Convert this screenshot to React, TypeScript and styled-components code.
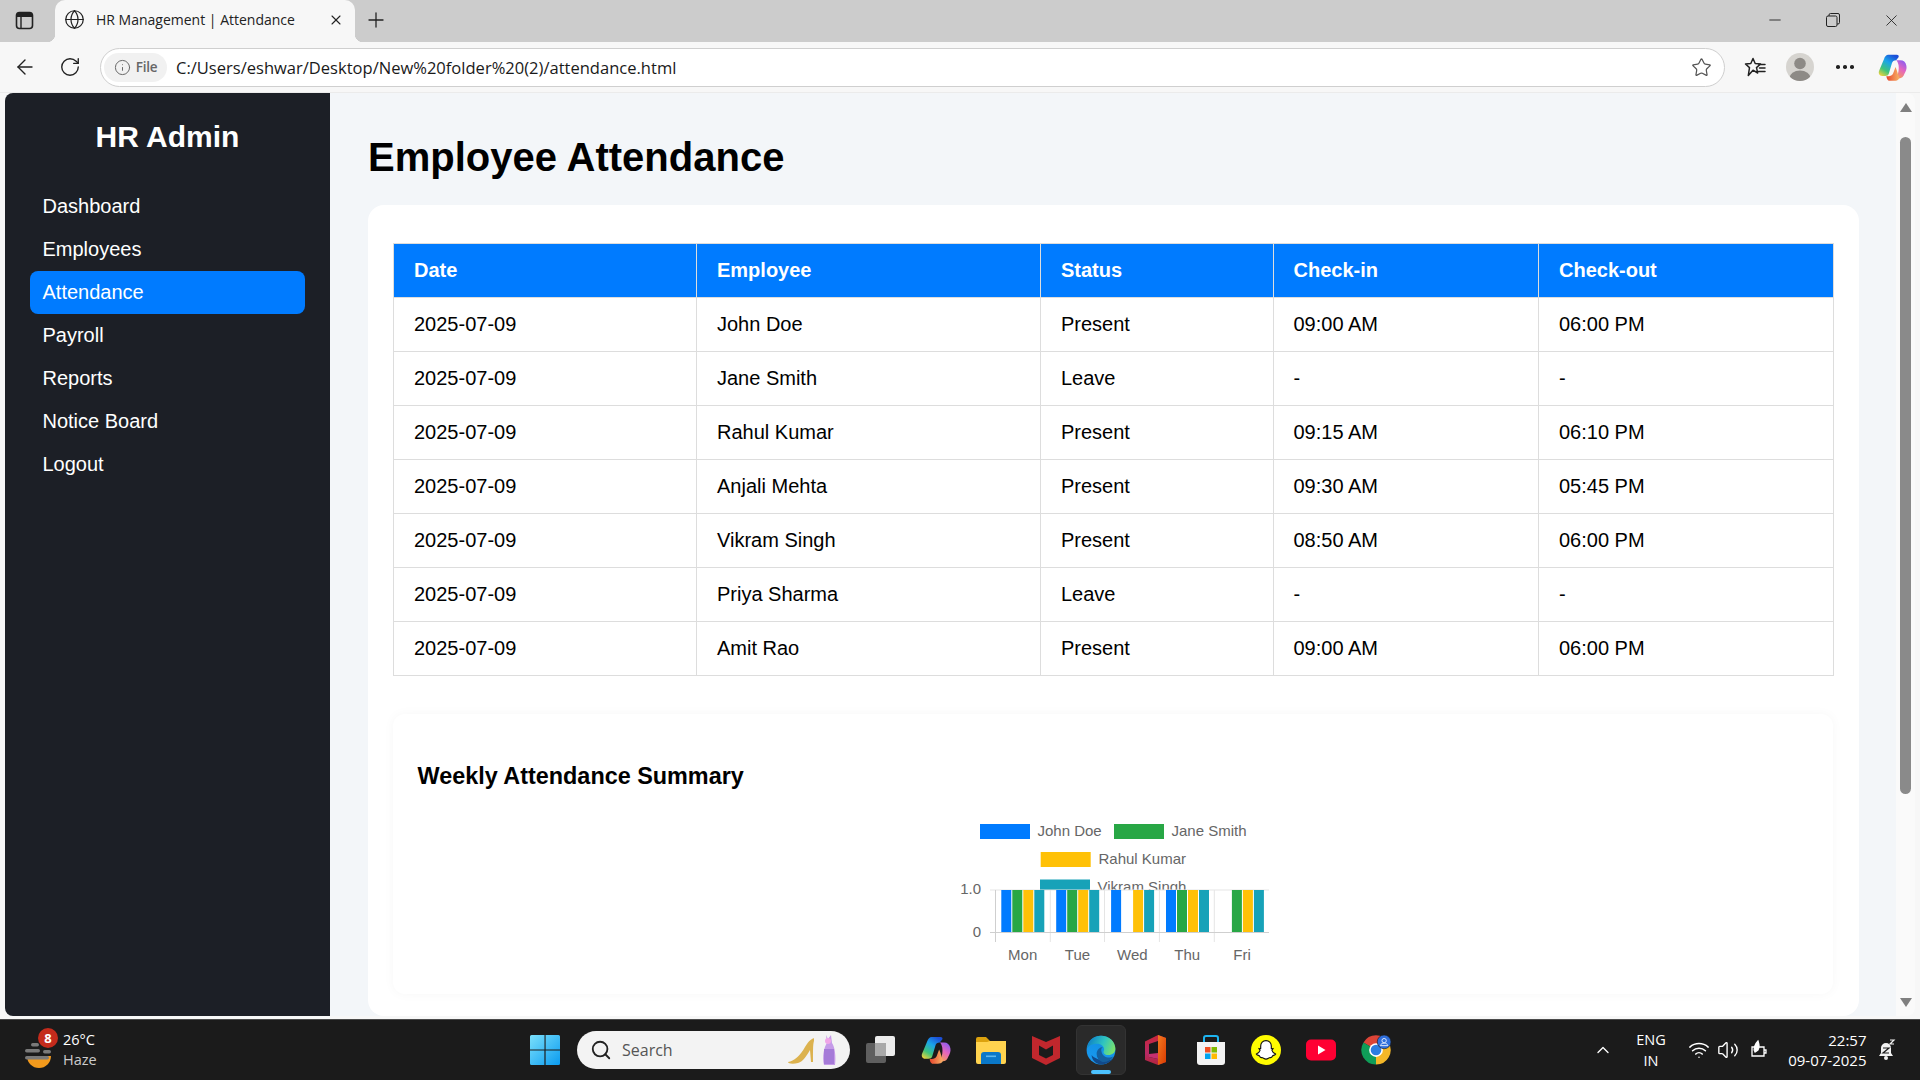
import React from "react";
import styled, { createGlobalStyle } from "styled-components";
import { ArrowLeft, RotateCw, Info, Star, X, Plus, Globe, Minus, ChevronUp, Wifi, Volume2, Search } from "lucide-react";

const GlobalStyle = createGlobalStyle`
  html, body { margin: 0; padding: 0; overflow: hidden; background: #f7f7f7; }
  * { box-sizing: border-box; }
  #root { width: 1920px; height: 1080px; }
`;

const UI_FONT = `"Open Sans", "Noto Sans", sans-serif`;
const PAGE_FONT = `"Liberation Sans", Arial, sans-serif`;

const Screen = styled.div`
  width: 1920px;
  height: 1080px;
  display: flex;
  flex-direction: column;
  overflow: hidden;
  background: #f7f7f7;
`;

/* ---------- browser chrome ---------- */
const TabStrip = styled.div`
  height: 42px;
  flex: none;
  display: flex;
  background: #cccccc;
`;
const TabMenu = styled.div`
  width: 55px;
  display: flex;
  align-items: center;
  justify-content: center;
  padding: 0 6px 2px 0;
`;
const Tab = styled.div`
  position: relative;
  width: 300px;
  display: flex;
  align-items: center;
  background: #f7f7f7;
  border-radius: 10px 10px 0 0;
  padding: 0 0 3px 9px;
  color: #222;
  &::before, &::after {
    content: "";
    position: absolute;
    bottom: 0;
    width: 8px;
    height: 8px;
  }
  &::before { left: -8px; background: radial-gradient(circle at 0 0, transparent 8px, #f7f7f7 8.5px); }
  &::after { right: -8px; background: radial-gradient(circle at 100% 0, transparent 8px, #f7f7f7 8.5px); }
`;
const TabTitle = styled.span`
  margin-left: 11px;
  flex: 1;
  font: 400 14px ${UI_FONT};
  white-space: nowrap;
`;
const TabClose = styled.span`
  width: 38px;
  display: flex;
  justify-content: center;
`;
const NewTab = styled.div`
  width: 42px;
  display: flex;
  align-items: center;
  justify-content: center;
  padding-bottom: 3px;
`;
const WindowControls = styled.div`
  margin-left: auto;
  display: flex;
`;
const WindowButton = styled.div`
  width: 58px;
  display: flex;
  align-items: center;
  justify-content: center;
  padding-bottom: 2px;
  color: #222;
`;

const Toolbar = styled.div`
  height: 51px;
  flex: none;
  display: flex;
  align-items: center;
  padding-left: 2px;
  border-bottom: 1px solid #ebebeb;
`;
const ToolButton = styled.div<{ $w?: number }>`
  width: ${(p) => p.$w ?? 45}px;
  flex: none;
  display: flex;
  align-items: center;
  justify-content: center;
  color: #222;
`;
const AddressBar = styled.div`
  width: 1625px;
  height: 39px;
  margin: 0 7.5px 0 8px;
  flex: none;
  display: flex;
  align-items: center;
  background: #fff;
  border: 1px solid #cfcfcf;
  border-radius: 20px;
  padding: 0 12px 0 3px;
`;
const FileChip = styled.div`
  width: 63px;
  height: 29px;
  flex: none;
  display: flex;
  align-items: center;
  justify-content: center;
  gap: 5px;
  background: #f1f1f1;
  border-radius: 15px;
  color: #666;
  font: 600 13.5px ${UI_FONT};
  letter-spacing: -0.3px;
`;
const Url = styled.span`
  margin-left: 9px;
  flex: 1;
  font: 400 16.55px ${UI_FONT};
  color: #1a1a1a;
  white-space: nowrap;
`;
const Avatar = styled.div`
  width: 28px;
  height: 28px;
  border-radius: 50%;
  background: #d6d4d0;
  overflow: hidden;
  display: flex;
`;
const Dots = styled.span`
  display: flex;
  gap: 3.5px;
  & > i {
    width: 3.5px;
    height: 3.5px;
    border-radius: 50%;
    background: #222;
  }
`;

/* ---------- page ---------- */
const PageFrame = styled.div`
  height: 923px;
  flex: none;
  margin: 0 5px;
  display: flex;
  overflow: hidden;
  border-radius: 8px;
  background: #f3f6f9;
  font-family: ${PAGE_FONT};
`;
const Sidebar = styled.aside`
  width: 325px;
  flex: none;
  background: #1c1f26;
  color: #fff;
  padding: 24px 25px 0;
`;
const Brand = styled.h2`
  margin: 0 0 28px;
  height: 40px;
  line-height: 40px;
  text-align: center;
  font-size: 30px;
  font-weight: 700;
`;
const NavList = styled.nav`
  display: flex;
  flex-direction: column;
`;
const NavItem = styled.a<{ $active?: boolean }>`
  height: 43px;
  line-height: 43px;
  padding-left: 12.5px;
  border-radius: 8px;
  font-size: 20px;
  color: #fff;
  background: ${(p) => (p.$active ? "#007bff" : "transparent")};
`;

const Main = styled.main`
  flex: 1;
  min-width: 0;
  padding: 38px 37px 0 38px;
  display: flex;
  flex-direction: column;
`;
const Heading = styled.h1`
  margin: 0 0 22px;
  height: 52px;
  line-height: 52px;
  font-size: 40px;
  font-weight: 700;
  color: #000;
`;
const Card = styled.section`
  flex: 1;
  min-height: 0;
  background: #fff;
  border-radius: 16px;
  padding: 38px 25px 0;
  overflow: hidden;
`;
const Table = styled.table`
  width: 1440px;
  table-layout: fixed;
  border-collapse: collapse;
  font-size: 20px;
`;
const Th = styled.th`
  height: 54px;
  padding: 0 20px;
  text-align: left;
  font-weight: 700;
  color: #fff;
  background: #007bff;
  border: 1px solid #ddd;
`;
const Td = styled.td`
  height: 54px;
  padding: 0 20px;
  color: #000;
  border: 1px solid #ddd;
`;
const ChartCard = styled.div`
  margin-top: 38px;
  height: 280px;
  width: 1440px;
  padding: 48px 24px 0 24.5px;
  background: #fff;
  border-radius: 12px;
  box-shadow: 0 0 12px rgba(0, 0, 0, 0.035);
`;
const ChartTitle = styled.h3`
  margin: 0 0 10px;
  height: 28px;
  line-height: 28px;
  font-size: 23.4px;
  font-weight: 700;
  color: #000;
`;
const ChartWrap = styled.div`
  display: flex;
  justify-content: center;
`;
const ChartSvg = styled.svg`
  display: block;
  overflow: visible;
  text {
    font-family: ${PAGE_FONT};
    font-size: 15px;
    fill: #666;
  }
`;

const ScrollBar = styled.div`
  width: 19px;
  flex: none;
  background: #fafafa;
  display: flex;
  flex-direction: column;
  align-items: center;
  padding: 7px 0 6px;
`;
const ScrollArrow = styled.svg`
  width: 14px;
  height: 16px;
  flex: none;
  fill: #808080;
`;
const ScrollThumb = styled.div`
  width: 11px;
  height: 657px;
  margin: 21px 0 auto;
  background: #8a8a8a;
  border-radius: 6px;
`;

/* ---------- taskbar ---------- */
const Taskbar = styled.footer`
  margin-top: 3px;
  height: 61px;
  flex: none;
  display: flex;
  align-items: center;
  background: #1b1b1b;
  border-top: 1px solid #4a4a4a;
  color: #fff;
  font-family: ${UI_FONT};
`;
const WeatherBlock = styled.div`
  width: 530px;
  flex: none;
  padding-left: 25px;
  display: flex;
  align-items: center;
  gap: 10px;
`;
const WeatherIcon = styled.div`
  position: relative;
  width: 29px;
  height: 40px;
  display: flex;
  align-items: flex-end;
`;
const Badge = styled.span`
  position: absolute;
  left: 13px;
  top: -2px;
  width: 20px;
  height: 20px;
  border-radius: 50%;
  background: #c42b1c;
  color: #fff;
  font: 700 13px/20px ${UI_FONT};
  text-align: center;
`;
const WeatherText = styled.div`
  display: flex;
  flex-direction: column;
  font-size: 14.5px;
  line-height: 20px;
  margin-left: -1px;
  & > span + span { color: #ccc; }
`;
const StartButton = styled.div`
  width: 30px;
  height: 30px;
  flex: none;
  display: flex;
`;
const SearchBox = styled.div`
  width: 273px;
  height: 38px;
  margin-left: 17px;
  flex: none;
  display: flex;
  align-items: center;
  background: #f3f3f3;
  border-radius: 19px;
  padding-left: 13px;
  color: #555;
  font-size: 16px;
`;
const SearchLabel = styled.span`
  margin-left: 10px;
  flex: 1;
`;
const SearchArt = styled.svg`
  width: 52px;
  height: 34px;
  margin-right: 12px;
`;
const AppDock = styled.div`
  margin-left: 3px;
  display: flex;
`;
const AppSlot = styled.div<{ $active?: boolean }>`
  position: relative;
  width: 55px;
  height: 50px;
  display: flex;
  align-items: center;
  justify-content: center;
  &::before {
    content: "";
    position: absolute;
    left: 2.5px;
    right: 2.5px;
    top: 0;
    bottom: 0;
    border-radius: 6px;
    display: ${(p) => (p.$active ? "block" : "none")};
    background: #2a2a2a;
    border: 1px solid #333;
  }
  &::after {
    content: "";
    position: absolute;
    left: 17.5px;
    width: 20px;
    height: 4px;
    bottom: 1px;
    border-radius: 2px;
    display: ${(p) => (p.$active ? "block" : "none")};
    background: #4cc2ff;
  }
  & > svg { position: relative; z-index: 1; }
`;
const TrayArea = styled.div`
  margin-left: auto;
  width: 330px;
  flex: none;
  display: flex;
  align-items: center;
`;
const TrayChevron = styled.div`
  width: 26px;
  display: flex;
  justify-content: center;
`;
const LangBlock = styled.div`
  width: 50px;
  margin-left: 10px;
  text-align: center;
  font-size: 14.5px;
  line-height: 21px;
`;
const TrayIcons = styled.div`
  margin-left: 8px;
  display: flex;
`;
const TraySlot = styled.div`
  width: 29.5px;
  display: flex;
  justify-content: center;
`;
const Clock = styled.div`
  width: 94px;
  text-align: right;
  font-size: 15px;
  line-height: 20px;
`;
const BellSlot = styled.div`
  width: 40px;
  display: flex;
  justify-content: center;
`;

/* ---------- data ---------- */
const COLS = [303, 344, 232.5, 265.5, 295];
const HEAD = ["Date", "Employee", "Status", "Check-in", "Check-out"];
const ROWS = [
  ["2025-07-09", "John Doe", "Present", "09:00 AM", "06:00 PM"],
  ["2025-07-09", "Jane Smith", "Leave", "-", "-"],
  ["2025-07-09", "Rahul Kumar", "Present", "09:15 AM", "06:10 PM"],
  ["2025-07-09", "Anjali Mehta", "Present", "09:30 AM", "05:45 PM"],
  ["2025-07-09", "Vikram Singh", "Present", "08:50 AM", "06:00 PM"],
  ["2025-07-09", "Priya Sharma", "Leave", "-", "-"],
  ["2025-07-09", "Amit Rao", "Present", "09:00 AM", "06:00 PM"],
];
const NAV = ["Dashboard", "Employees", "Attendance", "Payroll", "Reports", "Notice Board", "Logout"];
const BAR_COLORS = ["#007bff", "#28a745", "#ffc107", "#17a2b8"];
const DAYS = [
  { label: "Mon", cx: 82.7, present: [1, 1, 1, 1] },
  { label: "Tue", cx: 137.5, present: [1, 1, 1, 1] },
  { label: "Wed", cx: 192.4, present: [1, 0, 1, 1] },
  { label: "Thu", cx: 247.3, present: [1, 1, 1, 1] },
  { label: "Fri", cx: 302.1, present: [0, 1, 1, 1] },
];

/* ---------- drawings ---------- */
const AttendanceChart = () => (
  <ChartSvg width={346} height={170} viewBox="0 0 346 170">
    <rect x={40} y={24} width={50} height={15} fill="#007bff" />
    <text x={97.5} y={36}>John Doe</text>
    <rect x={174} y={24} width={50} height={15} fill="#28a745" />
    <text x={231.5} y={36}>Jane Smith</text>
    <rect x={100.7} y={52} width={50} height={15} fill="#ffc107" />
    <text x={158.5} y={64}>Rahul Kumar</text>
    <rect x={100} y={79.5} width={50} height={10.5} fill="#17a2b8" />
    <text x={157.5} y={91.5}>Vikram Singh</text>
    <rect x={100} y={90} width={182} height={12} fill="#fff" />
    {[110.3, 164.5, 219.4, 274.3].map((x) => (
      <line key={x} x1={x} x2={x} y1={90} y2={142} stroke="#e5e5e5" />
    ))}
    <line x1={50} x2={329} y1={90} y2={90} stroke="#e5e5e5" />
    <line x1={55.5} x2={55.5} y1={90} y2={142} stroke="#cfcfcf" />
    <line x1={50} x2={329} y1={132.5} y2={132.5} stroke="#cfcfcf" />
    {DAYS.map((d, i) =>
      d.present.map((on, j) =>
        on ? (
          <rect
            key={`${d.label}${j}`}
            x={61.3 + i * 54.9 + j * 11}
            y={90}
            width={10}
            height={42}
            fill={BAR_COLORS[j]}
          />
        ) : null
      )
    )}
    <text x={41} y={93.5} textAnchor="end">1.0</text>
    <text x={41} y={136.5} textAnchor="end">0</text>
    {DAYS.map((d) => (
      <text key={d.label} x={d.cx} y={160} textAnchor="middle">{d.label}</text>
    ))}
  </ChartSvg>
);

const TabsIcon = () => (
  <svg width="19" height="19" viewBox="0 0 19 19" fill="none">
    <rect x="1.5" y="1.5" width="16" height="16" rx="3" stroke="#222" strokeWidth="1.6" />
    <path d="M1.5 5a3 3 0 0 1 3-3.5h10a3 3 0 0 1 3 3.5v1h-16z" fill="#222" />
    <path d="M6 6v11" stroke="#222" strokeWidth="1.4" />
  </svg>
);
const RestoreIcon = () => (
  <svg width="14" height="14" viewBox="0 0 14 14" fill="none" stroke="#222" strokeWidth="1">
    <rect x="0.5" y="3" width="10.5" height="10.5" rx="1.5" />
    <path d="M3 3V2a1.5 1.5 0 0 1 1.5-1.5h7.5A1.5 1.5 0 0 1 13.5 2v7.5A1.5 1.5 0 0 1 12 11h-1" />
  </svg>
);
const FavoritesIcon = () => (
  <svg width="22" height="22" viewBox="0 0 22 22" fill="none" stroke="#222" strokeWidth="1.5" strokeLinejoin="round">
    <path d="M9 2.5l2.2 5 5.3.5-4 3.6 1.2 5.4L9 14.2 4.3 19.5l1.2-7.9L1.5 8l5.3-.5z" />
    <path d="M15 8.5h6M15.5 12h5.5M14.5 15.5H21" strokeLinecap="round" />
  </svg>
);
const AvatarFigure = () => (
  <svg width="28" height="28" viewBox="0 0 28 28">
    <circle cx="14" cy="10.5" r="5.8" fill="#8d8a86" />
    <ellipse cx="14" cy="25" rx="10.5" ry="7.5" fill="#8d8a86" />
  </svg>
);
const CopilotIcon = ({ size = 30, uid = "t" }: { size?: number; uid?: string }) => (
  <svg width={size} height={size} viewBox="0 0 48 48">
    <defs>
      <linearGradient id={`cpA${uid}`} x1="0.1" y1="1" x2="0.7" y2="0">
        <stop offset="0" stopColor="#f5d33b" />
        <stop offset="0.3" stopColor="#3fc47a" />
        <stop offset="0.65" stopColor="#1aa4ea" />
        <stop offset="1" stopColor="#1c4fd8" />
      </linearGradient>
      <linearGradient id={`cpB${uid}`} x1="0.3" y1="1" x2="0.7" y2="0">
        <stop offset="0" stopColor="#f59a5c" />
        <stop offset="0.5" stopColor="#e565c0" />
        <stop offset="1" stopColor="#8a5cf0" />
      </linearGradient>
      <linearGradient id={`cpC${uid}`} x1="0" y1="0" x2="1" y2="0">
        <stop offset="0" stopColor="#e8452c" />
        <stop offset="1" stopColor="#f7b267" />
      </linearGradient>
    </defs>
    <path d="M17 3h14c3 0 4 2 3 4l-4 5c-4 0-6 2-7 5l-5 17c-1 3-3 4-6 4H7c-5 0-7-5-5-9l8-19c1-4 4-7 7-7z" fill={`url(#cpA${uid})`} />
    <path d="M30 12h7c5 0 9 3 10 9 1 5-1 9-3 13-2 6-5 8-9 8l-4-2c3-6 4-14 3-20-1-4-2-7-4-8z" fill={`url(#cpB${uid})`} />
    <path d="M14 38c5 1 9 0 11-4l4-11c2 4 4 12 6 19-2 3-5 4-8 4H19c-3 0-5-4-5-8z" fill={`url(#cpC${uid})`} />
  </svg>
);
const WeatherArt = () => (
  <svg width="29" height="27" viewBox="0 0 29 27">
    <path d="M3 10h24a12 12 0 0 1-24 0z" transform="translate(-1 3)" fill="#f39a1c" />
    <rect x="6" y="0" width="8" height="3.5" rx="1.7" fill="#7a7a7a" />
    <rect x="0" y="6" width="15" height="3.5" rx="1.7" fill="#7a7a7a" />
    <rect x="18" y="7" width="8" height="3.5" rx="1.7" fill="#7a7a7a" />
    <rect x="0" y="13" width="24" height="3.5" rx="1.7" fill="#7a7a7a" />
  </svg>
);
const WindowsLogo = () => (
  <svg width="30" height="30" viewBox="0 0 30 30">
    <defs>
      <linearGradient id="win" x1="0" y1="0" x2="1" y2="1">
        <stop offset="0" stopColor="#7be0fb" />
        <stop offset="1" stopColor="#0a9bf0" />
      </linearGradient>
    </defs>
    <path d="M0 1.5A1.5 1.5 0 0 1 1.5 0h13v14.4H0zM15.6 0h12.9A1.5 1.5 0 0 1 30 1.5v12.9H15.6zM0 15.6h14.4V30H1.5A1.5 1.5 0 0 1 0 28.5zM15.6 15.6H30v12.9a1.5 1.5 0 0 1-1.5 1.5H15.6z" fill="url(#win)" />
  </svg>
);
const SearchDecor = () => (
  <SearchArt viewBox="0 0 52 34">
    <path d="M2 29c6-1 12-6 17-15 4-7 7-8 9-9v3c-1 3-1 8-1 21h-2l-1-12c-3 5-7 12-12 13-4 1-10 1-10-1z" fill="#dcb24e" />
    <path d="M40 2l2 4 3-4 1 8c3 4 4 14 3 22h-11c-2-8 0-18 3-22z" fill="#c59be8" />
    <path d="M38 16h10v15h-10z" fill="#a57bd8" />
    <circle cx="42" cy="8" r="3" fill="#f0a5e8" />
  </SearchArt>
);
const TaskViewIcon = () => (
  <svg width="30" height="30" viewBox="0 0 30 30">
    <rect x="0" y="8" width="20" height="20" rx="2" fill="#5f5f5f" />
    <rect x="9" y="1" width="20" height="20" rx="2" fill="#ececec" />
    <rect x="9" y="8" width="11" height="13" fill="#a9a9a9" />
  </svg>
);
const FolderIcon = () => (
  <svg width="30" height="28" viewBox="0 0 30 28">
    <path d="M0 3a2 2 0 0 1 2-2h8l4 4h14a2 2 0 0 1 2 2v3H0z" fill="#dca20e" />
    <path d="M0 6h11l3-1h16v21a2 2 0 0 1-2 2H2a2 2 0 0 1-2-2z" fill="#ffd34f" />
    <path d="M5 19a3 3 0 0 1 3-3h14a3 3 0 0 1 3 3v9H5z" fill="#0a78c9" />
    <rect x="10" y="19.5" width="10" height="1.6" fill="#5cb8f0" />
  </svg>
);
const McAfeeIcon = () => (
  <svg width="28" height="30" viewBox="0 0 28 30">
    <path d="M0 1l14 6 14-6v22l-14 7-14-7z" fill="#c1272d" />
    <path d="M7 10.5l7 4 7-4v9.5l-7 3.5-7-3.5z" fill="#1b1b1b" />
  </svg>
);
const EdgeIcon = () => (
  <svg width="30" height="30" viewBox="0 0 48 48">
    <defs>
      <linearGradient id="edgeG" x1="0" y1="0.3" x2="1" y2="0.6">
        <stop offset="0" stopColor="#0c7dc8" />
        <stop offset="0.55" stopColor="#2fc4c0" />
        <stop offset="1" stopColor="#7be36b" />
      </linearGradient>
      <linearGradient id="edgeB" x1="0.7" y1="0" x2="0.3" y2="1">
        <stop offset="0" stopColor="#0e8de0" />
        <stop offset="1" stopColor="#1a9af0" />
      </linearGradient>
    </defs>
    <circle cx="24" cy="24" r="23" fill="url(#edgeB)" />
    <path d="M44 37c-5 6-12 10-20 10-8 0-15-7-15-15 6 8 26 12 35 5z" fill="#114a8b" />
    <path d="M1.5 22C3 9 12 1 24 1c13 0 23 9 23 21 0 6-5 10-11 10-5 0-8-2-8-5 0-1 1-2 1-4 0-5-5-9-11-9C11 14 4 17 1.500 22z" fill="url(#edgeG)" />
    <path d="M17 30c0-6 5-11 10-11-3 2-3 5-2 8 1 5 6 9 12 9 3 0 6-1 7-2-4 7-12 10-18 9-6-2-9-7-9-13z" fill="#15609f" />
  </svg>
);
const OfficeIcon = () => (
  <svg width="21" height="30" viewBox="0 0 21 30">
    <defs>
      <linearGradient id="offA" x1="0" y1="0" x2="1" y2="1">
        <stop offset="0" stopColor="#f47a20" />
        <stop offset="1" stopColor="#d83b01" />
      </linearGradient>
      <linearGradient id="offL" x1="0" y1="0" x2="0" y2="1">
        <stop offset="0" stopColor="#c8263a" />
        <stop offset="0.6" stopColor="#b82a66" />
        <stop offset="1" stopColor="#b3243b" />
      </linearGradient>
    </defs>
    <path d="M0 6.500L13 0l8 3v24l-8 3-13-5z" fill="url(#offL)" />
    <path d="M4 9l9-3v18l-9-2z" fill="#1b1b1b" />
    <path d="M13 0l8 3v24l-8 3z" fill="url(#offA)" />
    <path d="M4 19l9-1v6l-9-2z" fill="#c7306f" />
  </svg>
);
const StoreIcon = () => (
  <svg width="30" height="31" viewBox="0 0 30 31">
    <path d="M8 8V3a2 2 0 0 1 2-2h10a2 2 0 0 1 2 2v5" fill="none" stroke="#1db4f0" strokeWidth="2" />
    <path d="M1 7h28v20a3 3 0 0 1-3 3H4a3 3 0 0 1-3-3z" fill="#f3f3f3" />
    <rect x="9" y="12" width="5.5" height="5.500" fill="#f25022" />
    <rect x="15.500" y="12" width="5.5" height="5.500" fill="#7fba00" />
    <rect x="9" y="18.500" width="5.5" height="5.500" fill="#00a4ef" />
    <rect x="15.500" y="18.500" width="5.5" height="5.500" fill="#ffb900" />
  </svg>
);
const SnapchatIcon = () => (
  <svg width="30" height="30" viewBox="0 0 48 48">
    <circle cx="24" cy="24" r="24" fill="#fffc00" />
    <path d="M24 9c5 0 8.500 4 8.500 8.500v4.500l3-.5-2 3c1 3 3 5 6 6-1 2-4 2-5 3-1 2-2 3-4 2.500-2 0-3.500 2.500-6.500 2.500s-4.500-2.500-6.500-2.500c-2 .5-3-.5-4-2.500-1-1-4-1-5-3 3-1 5-3 6-6l-2-3 3 .5v-4.500C15.500 13 19 9 24 9z" fill="#fff" stroke="#111" strokeWidth="1.800" strokeLinejoin="round" />
  </svg>
);
const YouTubeIcon = () => (
  <svg width="30" height="22" viewBox="0 0 30 22">
    <rect width="30" height="21" rx="5" y="0.500" fill="#ff0033" />
    <path d="M12 6.500v9l7.500-4.500z" fill="#fff" />
  </svg>
);
const ChromeIcon = () => (
  <svg width="30" height="30" viewBox="0 0 48 48">
    <path d="M24 24L4 12A23 23 0 0 1 44 12z" fill="#db4437" />
    <path d="M24 24L44 12A23 23 0 0 1 24 47z" fill="#f4b728" />
    <path d="M24 24V47A23 23 0 0 1 4 12z" fill="#0f9d58" />
    <circle cx="24" cy="24" r="11" fill="#fff" />
    <circle cx="24" cy="24" r="8.500" fill="#2a7de1" />
    <circle cx="37" cy="11" r="11" fill="#2f6fdc" stroke="#1b1b1b" strokeWidth="1" />
    <circle cx="37" cy="9" r="3.500" fill="none" stroke="#dbe6fb" strokeWidth="1.600" />
    <path d="M31 17c1-3 3-4 6-4s5 1 6 4z" fill="none" stroke="#dbe6fb" strokeWidth="1.600" />
  </svg>
);
const BatterySaverIcon = () => (
  <svg width="20" height="20" viewBox="0 0 20 20" fill="none" stroke="#fff" strokeWidth="1.300">
    <path d="M4 8h12v9H4z" />
    <path d="M16 11h2v3h-2" />
    <path d="M7 13c-2-3 0-8 3-11 1 3 2 6 0 9z" fill="#fff" />
  </svg>
);
const BellIcon = () => (
  <svg width="18" height="22" viewBox="0 0 18 22">
    <path d="M8 4a5 5 0 0 1 5 5v5l2 3H1l2-3V9a5 5 0 0 1 5-5z" fill="#f2f2f2" />
    <circle cx="8" cy="19" r="2" fill="#f2f2f2" />
    <path d="M12 1h4l-4 4h4" fill="none" stroke="#f2f2f2" strokeWidth="1.200" />
    <path d="M5 9h6l-6 5h6" fill="none" stroke="#1b1b1b" strokeWidth="1.200" />
  </svg>
);

const DOCK: { key: string; el: React.ReactNode; active?: boolean }[] = [
  { key: "taskview", el: <TaskViewIcon /> },
  { key: "copilot", el: <CopilotIcon uid="dock" /> },
  { key: "folder", el: <FolderIcon /> },
  { key: "mcafee", el: <McAfeeIcon /> },
  { key: "edge", el: <EdgeIcon />, active: true },
  { key: "office", el: <OfficeIcon /> },
  { key: "store", el: <StoreIcon /> },
  { key: "snapchat", el: <SnapchatIcon /> },
  { key: "youtube", el: <YouTubeIcon /> },
  { key: "chrome", el: <ChromeIcon /> },
];

export default function App() {
  return (
    <Screen>
      <GlobalStyle />
      <TabStrip>
        <TabMenu><TabsIcon /></TabMenu>
        <Tab>
          <Globe size={21} strokeWidth={1.4} />
          <TabTitle>HR Management | Attendance</TabTitle>
          <TabClose><X size={16} strokeWidth={1.6} /></TabClose>
        </Tab>
        <NewTab><Plus size={24} strokeWidth={1.3} color="#222" /></NewTab>
        <WindowControls>
          <WindowButton><Minus size={18} strokeWidth={1.2} /></WindowButton>
          <WindowButton><RestoreIcon /></WindowButton>
          <WindowButton><X size={19} strokeWidth={1.1} /></WindowButton>
        </WindowControls>
      </TabStrip>
      <Toolbar>
        <ToolButton><ArrowLeft size={24} strokeWidth={1.4} /></ToolButton>
        <ToolButton><RotateCw size={22} strokeWidth={1.5} /></ToolButton>
        <AddressBar>
          <FileChip><Info size={17} strokeWidth={1.4} />File</FileChip>
          <Url>C:/Users/eshwar/Desktop/New%20folder%20(2)/attendance.html</Url>
          <Star size={21} strokeWidth={1.4} color="#555" />
        </AddressBar>
        <ToolButton><FavoritesIcon /></ToolButton>
        <ToolButton><Avatar><AvatarFigure /></Avatar></ToolButton>
        <ToolButton><Dots><i /><i /><i /></Dots></ToolButton>
        <ToolButton $w={50}><CopilotIcon size={29} uid="bar" /></ToolButton>
      </Toolbar>
      <PageFrame>
        <Sidebar>
          <Brand>HR Admin</Brand>
          <NavList>
            {NAV.map((n) => (
              <NavItem key={n} $active={n === "Attendance"}>{n}</NavItem>
            ))}
          </NavList>
        </Sidebar>
        <Main>
          <Heading>Employee Attendance</Heading>
          <Card>
            <Table>
              <colgroup>
                {COLS.map((w) => <col key={w} width={w} />)}
              </colgroup>
              <thead>
                <tr>{HEAD.map((h) => <Th key={h}>{h}</Th>)}</tr>
              </thead>
              <tbody>
                {ROWS.map((r) => (
                  <tr key={r[1]}>{r.map((c, i) => <Td key={i}>{c}</Td>)}</tr>
                ))}
              </tbody>
            </Table>
            <ChartCard>
              <ChartTitle>Weekly Attendance Summary</ChartTitle>
              <ChartWrap><AttendanceChart /></ChartWrap>
            </ChartCard>
          </Card>
        </Main>
        <ScrollBar>
          <ScrollArrow viewBox="0 0 14 16"><path d="M7 3l6 9H1z" /></ScrollArrow>
          <ScrollThumb />
          <ScrollArrow viewBox="0 0 14 16"><path d="M7 13L1 4h12z" /></ScrollArrow>
        </ScrollBar>
      </PageFrame>
      <Taskbar>
        <WeatherBlock>
          <WeatherIcon>
            <WeatherArt />
            <Badge>8</Badge>
          </WeatherIcon>
          <WeatherText><span>26°C</span><span>Haze</span></WeatherText>
        </WeatherBlock>
        <StartButton><WindowsLogo /></StartButton>
        <SearchBox>
          <Search size={22} strokeWidth={2} color="#222" />
          <SearchLabel>Search</SearchLabel>
          <SearchDecor />
        </SearchBox>
        <AppDock>
          {DOCK.map((d) => (
            <AppSlot key={d.key} $active={d.active}>{d.el}</AppSlot>
          ))}
        </AppDock>
        <TrayArea>
          <TrayChevron><ChevronUp size={20} strokeWidth={1.6} /></TrayChevron>
          <LangBlock>ENG<br />IN</LangBlock>
          <TrayIcons>
            <TraySlot><Wifi size={22} strokeWidth={1.7} /></TraySlot>
            <TraySlot><Volume2 size={22} strokeWidth={1.5} /></TraySlot>
            <TraySlot><BatterySaverIcon /></TraySlot>
          </TrayIcons>
          <Clock>22:57<br />09-07-2025</Clock>
          <BellSlot><BellIcon /></BellSlot>
        </TrayArea>
      </Taskbar>
    </Screen>
  );
}
